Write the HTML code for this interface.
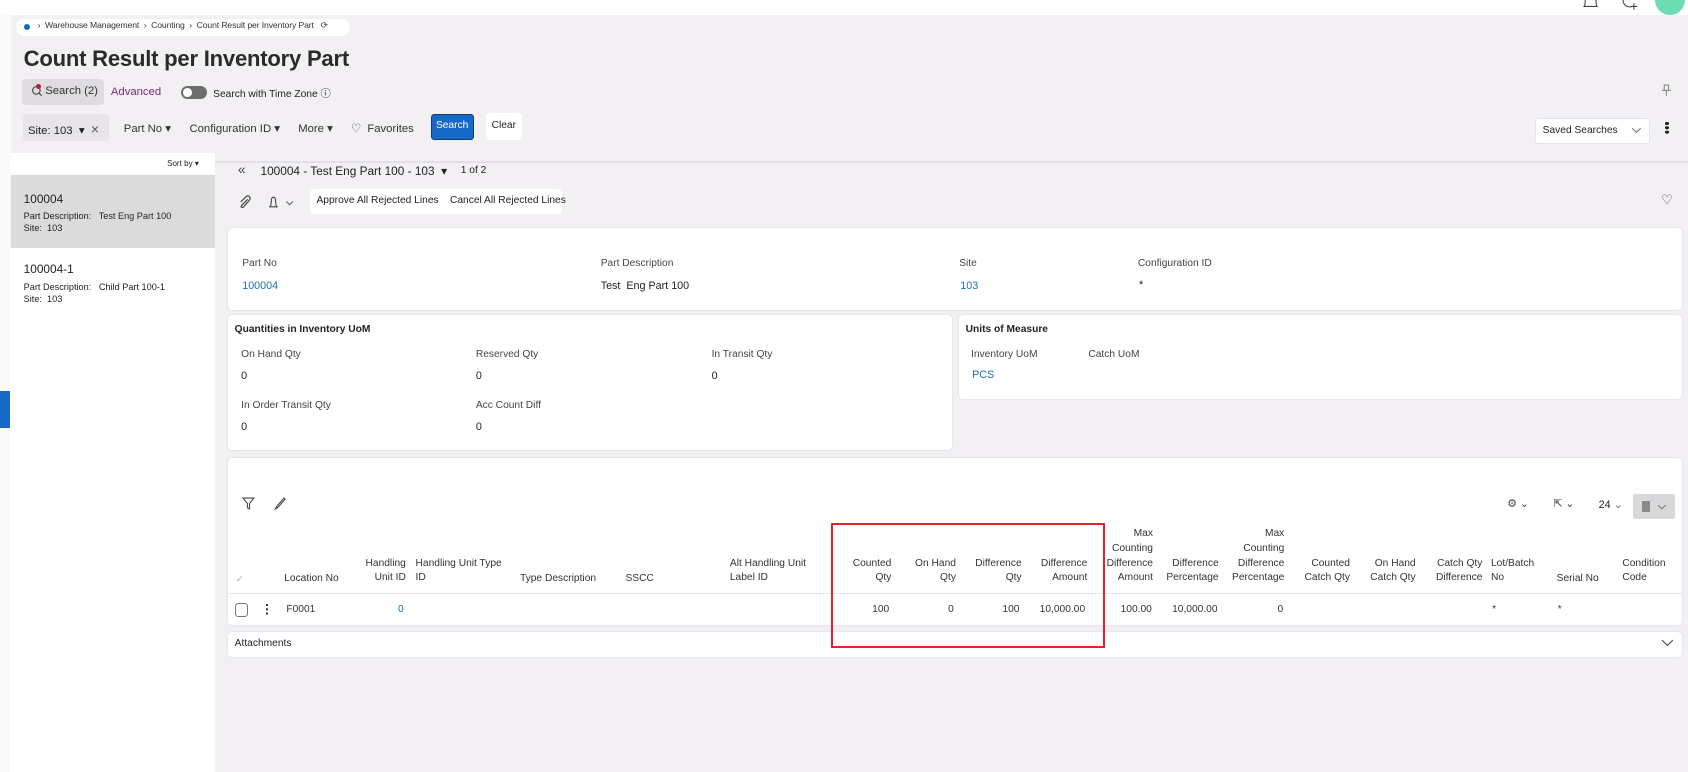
<!DOCTYPE html>
<html><head><meta charset="utf-8"><style>
*{margin:0;padding:0;box-sizing:border-box}
html,body{width:1688px;height:772px;overflow:hidden}
body{background:#f2f0f3;font-family:"Liberation Sans",sans-serif;color:#222}
#w{position:absolute;left:0;top:0;width:1568px;height:717px;zoom:1.07653}
.a{position:absolute;white-space:nowrap}
.s{font-size:9.5px}
.t{font-size:10px}
.card{position:absolute;background:#fff;border-radius:4px;box-shadow:0 0 2px rgba(0,0,0,.12)}
.r{text-align:right}
.h{font-size:9.5px;color:#333;line-height:13.5px;position:absolute;white-space:nowrap}
.lnk{color:#1a6fb5 !important}
</style></head><body><div id="w">
<div class="a" style="left:0;top:0;width:1568px;height:14px;background:#fff"></div>
<svg class="a" style="left:1470px;top:0" width="16" height="8"><path d="M3 0 Q3 5 2 6 H14 Q13 5 13 0" fill="none" stroke="#444"/></svg>
<svg class="a" style="left:1506px;top:0" width="16" height="10"><path d="M2 0 A6 6 0 0 0 10 6" fill="none" stroke="#444"/><path d="M12 3V9M9 6H15" stroke="#444"/></svg>
<div class="a" style="left:1537px;top:-14px;width:28px;height:28px;border-radius:50%;background:#6ddcb5"></div>
<div class="a" style="left:0;top:14px;width:10px;height:703px;background:#fafafa"></div>
<div class="a" style="left:0;top:363px;width:9px;height:35px;background:#1769c8"></div>
<!-- breadcrumb -->
<div class="a" style="left:15px;top:18px;width:310px;height:15px;background:#fff;border-radius:8px"></div>
<div class="a" style="left:22px;top:22px;width:6px;height:6px;border-radius:50%;background:#1769c8"></div>
<div class="a" style="left:35px;top:19px;font-size:8px;color:#333;letter-spacing:-0.1px">›&nbsp; Warehouse Management &nbsp;›&nbsp; Counting &nbsp;›&nbsp; Count Result per Inventory Part &nbsp;&nbsp;⟳</div>
<div class="a" style="left:22px;top:43px;font-size:20.5px;font-weight:bold;color:#2a2a2a;letter-spacing:-0.2px">Count Result per Inventory Part</div>
<div class="a" style="left:20px;top:73px;width:77px;height:25px;background:#dedcdf;border-radius:3px"></div>
<svg class="a" style="left:29px;top:79px" width="12" height="12"><circle cx="5" cy="5" r="3.5" fill="none" stroke="#444"/><path d="M7.5 7.5L10 10" stroke="#444"/></svg>
<div class="a" style="left:42px;top:79px;font-size:10.5px;color:#333">Search (2)</div>
<div class="a" style="left:33px;top:78px;width:5px;height:5px;border-radius:50%;background:#c0184a"></div>
<div class="a" style="left:103px;top:80px;font-size:10.5px;color:#7a2a78">Advanced</div>
<div class="a" style="left:168px;top:80px;width:24px;height:12px;border-radius:6px;background:#6d6d6d"></div>
<div class="a" style="left:170px;top:82px;width:8px;height:8px;border-radius:50%;background:#fff"></div>
<div class="a" style="left:198px;top:79px;font-size:9.5px">Search with Time Zone ⓘ</div>
<svg class="a" style="left:1543px;top:78px" width="10" height="12"><path d="M3 1H7V6H3Z M1 6H9 M5 6V11" fill="none" stroke="#888"/></svg>
<!-- filter row -->
<div class="a" style="left:21px;top:106px;width:80px;height:25px;background:#e7e5e9;border-radius:3px"></div>
<div class="a" style="left:26px;top:112px;font-size:10.5px">Site: 103 &nbsp;▾ &nbsp;<span style="font-size:13px;color:#555">×</span></div>
<div class="a" style="left:115px;top:113px;font-size:10.5px;color:#333">Part No ▾</div>
<div class="a" style="left:176px;top:113px;font-size:10.5px;color:#333">Configuration ID ▾</div>
<div class="a" style="left:277px;top:113px;font-size:10.5px;color:#333">More ▾</div>
<div class="a" style="left:326px;top:113px;font-size:10.5px;color:#333">♡ &nbsp;Favorites</div>
<div class="a" style="left:400px;top:106px;width:40px;height:24px;background:#1769c8;border:1.5px solid #0c3e80;border-radius:3px;color:#fff;font-size:9.5px;text-align:center;line-height:21px">Search</div>
<div class="a" style="left:451px;top:105px;width:34px;height:25px;background:#fff;border-radius:3px;font-size:9.5px;text-align:center;line-height:24px">Clear</div>
<div class="a" style="left:1426px;top:110px;width:107px;height:24px;background:#fff;border-radius:3px;border:1px solid #e6e4e8"></div>
<div class="a" style="left:1433px;top:116px;font-size:9.5px">Saved Searches</div>
<svg class="a" style="left:1515px;top:118px" width="10" height="6"><path d="M1 1L5 5L9 1" fill="none" stroke="#777"/></svg>
<div class="a" style="left:1547px;top:113px;width:3px;height:3px;background:#222;border-radius:50%;box-shadow:0 4px 0 #222,0 8px 0 #222"></div>
<div class="a" style="left:10px;top:150px;width:1558px;height:1px;background:#e2e0e4"></div>
<!-- left list -->
<div class="a" style="left:10px;top:142px;width:190px;height:575px;background:#fff"></div>
<div class="a" style="left:148px;top:146px;width:44px;height:13px;background:#fff;font-size:7.5px;line-height:13px;text-align:center">Sort by ▾</div>
<div class="a" style="left:10px;top:163px;width:190px;height:67px;background:#dcdbdc"></div>
<div class="a" style="left:22px;top:178px;font-size:11px">100004</div>
<div class="a" style="left:22px;top:196px;font-size:8.5px">Part Description:&nbsp;&nbsp; Test Eng Part 100</div>
<div class="a" style="left:22px;top:207px;font-size:8.5px">Site:&nbsp; 103</div>
<div class="a" style="left:22px;top:243px;font-size:11px">100004-1</div>
<div class="a" style="left:22px;top:262px;font-size:8.5px">Part Description:&nbsp;&nbsp; Child Part 100-1</div>
<div class="a" style="left:22px;top:273px;font-size:8.5px">Site:&nbsp; 103</div>
<!-- record nav -->
<div class="a" style="left:221px;top:150px;font-size:13px;color:#444">«</div>
<div class="a" style="left:242px;top:152px;font-size:11px">100004 - Test Eng Part 100 - 103 &nbsp;▾</div>
<div class="a" style="left:428px;top:153px;font-size:9.5px">1 of 2</div>
<svg class="a" style="left:221px;top:181px" width="12" height="13"><path d="M9 4L4 9Q2 11 3.5 11.5Q5 12 6 10L10.5 5Q12 3 10.5 1.5Q9 0 7 2L2.5 6.5" fill="none" stroke="#444" stroke-width="1.1"/></svg>
<svg class="a" style="left:248px;top:181px" width="30" height="14"><path d="M2 11H10M3 11Q4 9 4 6Q4 2 6 2Q8 2 8 6Q8 9 9 11" fill="none" stroke="#444"/><path d="M18 6L21 9L24 6" fill="none" stroke="#666"/></svg>
<div class="a" style="left:288px;top:176px;width:234px;height:23px;background:#fff;border-radius:4px"></div>
<div class="a" style="left:294px;top:181px;font-size:9.5px">Approve All Rejected Lines &nbsp;&nbsp; Cancel All Rejected Lines</div>
<div class="a" style="left:1543px;top:178px;font-size:12px;color:#333">♡</div>
<!-- card1 -->
<div class="card" style="left:212px;top:212px;width:1350px;height:76px"></div>
<div class="a s" style="left:225px;top:240px;color:#444">Part No</div>
<div class="a t lnk" style="left:225px;top:260px">100004</div>
<div class="a s" style="left:558px;top:240px;color:#444">Part Description</div>
<div class="a t" style="left:558px;top:260px">Test&nbsp; Eng Part 100</div>
<div class="a s" style="left:891px;top:240px;color:#444">Site</div>
<div class="a t lnk" style="left:892px;top:260px">103</div>
<div class="a s" style="left:1057px;top:240px;color:#444">Configuration ID</div>
<div class="a t" style="left:1058px;top:259px">*</div>
<!-- card2 -->
<div class="card" style="left:212px;top:293px;width:672px;height:125px"></div>
<div class="a s" style="left:218px;top:301px;font-weight:bold">Quantities in Inventory UoM</div>
<div class="a s" style="left:224px;top:324px;color:#444">On Hand Qty</div>
<div class="a t" style="left:224px;top:344px">0</div>
<div class="a s" style="left:442px;top:324px;color:#444">Reserved Qty</div>
<div class="a t" style="left:442px;top:344px">0</div>
<div class="a s" style="left:661px;top:324px;color:#444">In Transit Qty</div>
<div class="a t" style="left:661px;top:344px">0</div>
<div class="a s" style="left:224px;top:372px;color:#444">In Order Transit Qty</div>
<div class="a t" style="left:224px;top:391px">0</div>
<div class="a s" style="left:442px;top:372px;color:#444">Acc Count Diff</div>
<div class="a t" style="left:442px;top:391px">0</div>
<!-- card3 -->
<div class="card" style="left:891px;top:293px;width:671px;height:78px"></div>
<div class="a s" style="left:897px;top:301px;font-weight:bold">Units of Measure</div>
<div class="a s" style="left:902px;top:324px;color:#444">Inventory UoM</div>
<div class="a s" style="left:1011px;top:324px;color:#444">Catch UoM</div>
<div class="a t lnk" style="left:903px;top:343px">PCS</div>
<!-- table card -->
<div class="card" style="left:212px;top:425px;width:1350px;height:156px"></div>
<svg class="a" style="left:225px;top:462px" width="44" height="13"><path d="M1 1H11L7 6V11L5 10V6Z" fill="none" stroke="#444"/><path d="M31 11L33 10L40 2L39 1L32 9Z" fill="none" stroke="#444"/></svg>
<div class="a" style="left:1400px;top:462px;font-size:10px;color:#444">⚙ ⌄</div>
<div class="a" style="left:1443px;top:462px;font-size:10px;color:#444">⇱ ⌄</div>
<div class="a" style="left:1485px;top:463px;font-size:10px">24 <span style="color:#666">⌄</span></div>
<div class="a" style="left:1517px;top:459px;width:39px;height:23px;background:#d8d7d9;border-radius:2px"></div>
<div class="a" style="left:1525px;top:465px;width:8px;height:11px;background:#8a8a8a"></div>
<svg class="a" style="left:1539px;top:468px" width="9" height="6"><path d="M1 1L4.5 4.5L8 1" fill="none" stroke="#777"/></svg>
<div class="a" style="left:212px;top:551px;width:1350px;height:1px;background:#e6e6e6"></div>
<div class="a" style="left:219px;top:533px;font-size:9px;color:#aaa">✓</div>
<div class="h" style="left:264px;top:531px">Location No</div>
<div class="h r" style="right:1191px;top:517px">Handling<br>Unit ID</div>
<div class="h" style="left:386px;top:517px">Handling Unit Type<br>ID</div>
<div class="h" style="left:483px;top:531px">Type Description</div>
<div class="h" style="left:581px;top:531px">SSCC</div>
<div class="h" style="left:678px;top:517px">Alt Handling Unit<br>Label ID</div>
<div class="h r" style="right:740px;top:517px">Counted<br>Qty</div>
<div class="h r" style="right:680px;top:517px">On Hand<br>Qty</div>
<div class="h r" style="right:619px;top:517px">Difference<br>Qty</div>
<div class="h r" style="right:558px;top:517px">Difference<br>Amount</div>
<div class="h r" style="right:497px;top:490px">Max<br>Counting<br>Difference<br>Amount</div>
<div class="h r" style="right:436px;top:517px">Difference<br>Percentage</div>
<div class="h r" style="right:375px;top:490px">Max<br>Counting<br>Difference<br>Percentage</div>
<div class="h r" style="right:314px;top:517px">Counted<br>Catch Qty</div>
<div class="h r" style="right:253px;top:517px">On Hand<br>Catch Qty</div>
<div class="h r" style="right:191px;top:517px">Catch Qty<br>Difference</div>
<div class="h" style="left:1385px;top:517px">Lot/Batch<br>No</div>
<div class="h" style="left:1446px;top:531px">Serial No</div>
<div class="h" style="left:1507px;top:517px">Condition<br>Code</div>
<div class="a" style="left:218px;top:560px;width:12px;height:13px;border:1px solid #777;border-radius:3px"></div>
<div class="a" style="left:247px;top:561px;width:2px;height:2px;background:#333;box-shadow:0 4px 0 #333,0 8px 0 #333"></div>
<div class="h" style="left:266px;top:560px">F0001</div>
<div class="h r lnk" style="right:1193px;top:560px">0</div>
<div class="h r" style="right:742px;top:560px">100</div>
<div class="h r" style="right:682px;top:560px">0</div>
<div class="h r" style="right:621px;top:560px">100</div>
<div class="h r" style="right:560px;top:560px">10,000.00</div>
<div class="h r" style="right:498px;top:560px">100.00</div>
<div class="h r" style="right:437px;top:560px">10,000.00</div>
<div class="h r" style="right:376px;top:560px">0</div>
<div class="h" style="left:1386px;top:560px">*</div>
<div class="h" style="left:1447px;top:560px">*</div>
<!-- attachments -->
<div class="card" style="left:212px;top:587px;width:1350px;height:23px"></div>
<div class="a s" style="left:218px;top:593px">Attachments</div>
<svg class="a" style="left:1543px;top:594px" width="12" height="8"><path d="M1 1L6 6L11 1" fill="none" stroke="#444"/></svg>
<!-- red box -->
<div class="a" style="left:772px;top:486px;width:254px;height:116px;border:2.5px solid #e0242a"></div>
</div></body></html>
